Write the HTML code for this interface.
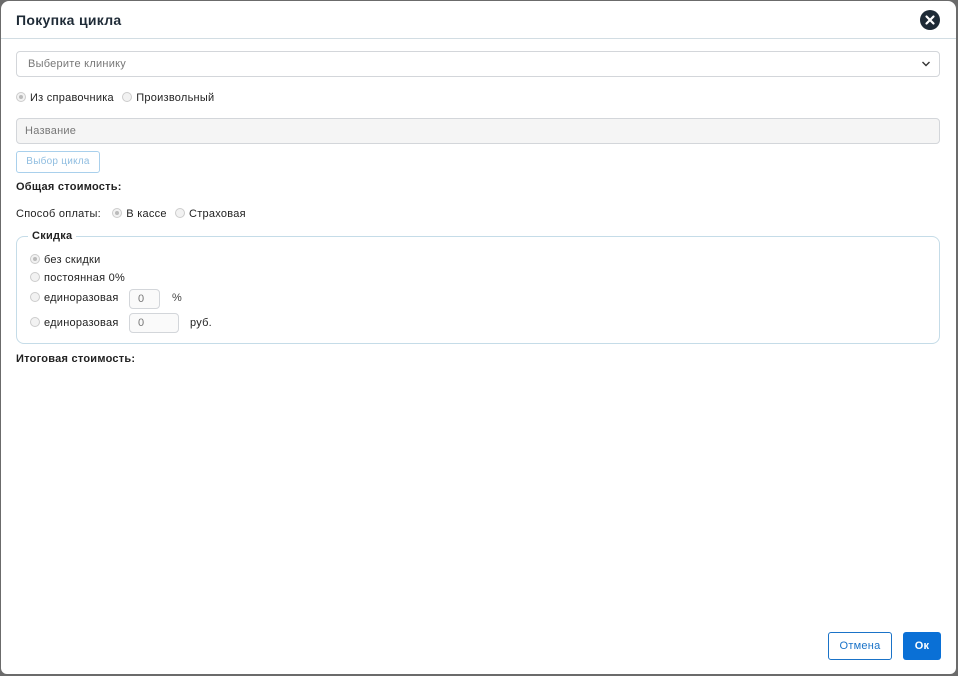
<!DOCTYPE html>
<html><head><meta charset="utf-8"><style>
*{box-sizing:border-box;margin:0;padding:0}
html,body{width:958px;height:676px;overflow:hidden;background:#6b6b6b;font-family:"Liberation Sans",Arial,sans-serif;color:#222;letter-spacing:0.25px}
.m{position:absolute;left:1px;top:1px;width:955px;height:673px;background:#fff;border-radius:8px 8px 6px 6px;overflow:hidden}
.a{position:absolute;white-space:nowrap}
.t{left:15px;top:11px;font-size:14px;font-weight:800;color:#1e2a36;letter-spacing:0.3px}
.hl{left:0;top:37px;width:955px;height:1px;background:#d2dde3}
.x{left:919px;top:9px;width:20px;height:20px;border-radius:50%;background:#1e2a36}
.inp{border:1px solid #d3d6da;border-radius:4px;font-size:11px;color:#777;padding-left:11px;display:flex;align-items:center}
.r{display:inline-block;width:10px;height:10px;border-radius:50%;border:1px solid #ccc;background:#f2f2f2;vertical-align:-1px;margin-right:4px;position:relative}
.r.on::after{content:"";position:absolute;left:2px;top:2px;width:4px;height:4px;border-radius:50%;background:#bbb}
.f{font-size:11px;color:#222}
.b{font-weight:bold;font-size:11px}
</style></head><body>
<div class="m">
<div class="a t">Покупка цикла</div>
<div class="a x"><svg width="20" height="20"><path d="M6.5 6.5L13.5 13.5M13.5 6.5L6.5 13.5" stroke="#fff" stroke-width="2.2" stroke-linecap="round"/></svg></div>
<div class="a hl"></div>
<div class="a inp" style="left:15px;top:50px;width:924px;height:26px">Выберите клинику</div>
<svg class="a" style="left:920px;top:59px" width="10" height="8"><path d="M1.5 2l3.5 3.5L8.5 2" stroke="#333" stroke-width="1.4" fill="none"/></svg>
<div class="a f" style="left:15px;top:91px"><span class="r on"></span>Из справочника <span class="r" style="margin-left:5px"></span>Произвольный</div>
<div class="a inp" style="left:15px;top:117px;width:924px;height:26px;background:#f5f5f5;padding-left:8px">Название</div>
<div class="a" style="left:15px;top:150px;width:84px;height:22px;border:1px solid #a9d0ec;border-radius:3px;font-size:10px;color:#8fbde0;text-align:center;line-height:20px">Выбор цикла</div>
<div class="a b" style="left:15px;top:180px">Общая стоимость:</div>
<div class="a f" style="left:15px;top:207px">Способ оплаты: <span class="r on" style="margin-left:8px"></span>В кассе <span class="r" style="margin-left:5px"></span>Страховая</div>
<div class="a" style="left:15px;top:235px;width:924px;height:108px;border:1px solid #c5dce8;border-radius:8px"></div>
<div class="a b" style="left:27px;top:229px;background:#fff;padding:0 4px">Скидка</div>
<div class="a f" style="left:29px;top:253px"><span class="r on"></span>без скидки</div>
<div class="a f" style="left:29px;top:271px"><span class="r"></span>постоянная 0%</div>
<div class="a f" style="left:29px;top:291px"><span class="r"></span>единоразовая</div>
<div class="a f" style="left:29px;top:316px"><span class="r"></span>единоразовая</div>
<div class="a inp" style="left:128px;top:288px;width:31px;height:20px;padding-left:8px;background:#fafafa">0</div>
<div class="a f" style="left:171px;top:291px;color:#444">%</div>
<div class="a inp" style="left:128px;top:312px;width:50px;height:20px;padding-left:8px;background:#fafafa">0</div>
<div class="a f" style="left:189px;top:316px">руб.</div>
<div class="a b" style="left:15px;top:352px">Итоговая стоимость:</div>
<div class="a" style="left:827px;top:631px;width:64px;height:28px;border:1px solid #1a73c8;border-radius:3px;color:#1a73c8;font-size:11px;text-align:center;line-height:26px">Отмена</div>
<div class="a" style="left:902px;top:631px;width:38px;height:28px;background:#0a70d6;border-radius:3px;color:#fff;font-size:11px;font-weight:bold;text-align:center;line-height:28px">Ок</div>
</div>
</body></html>
